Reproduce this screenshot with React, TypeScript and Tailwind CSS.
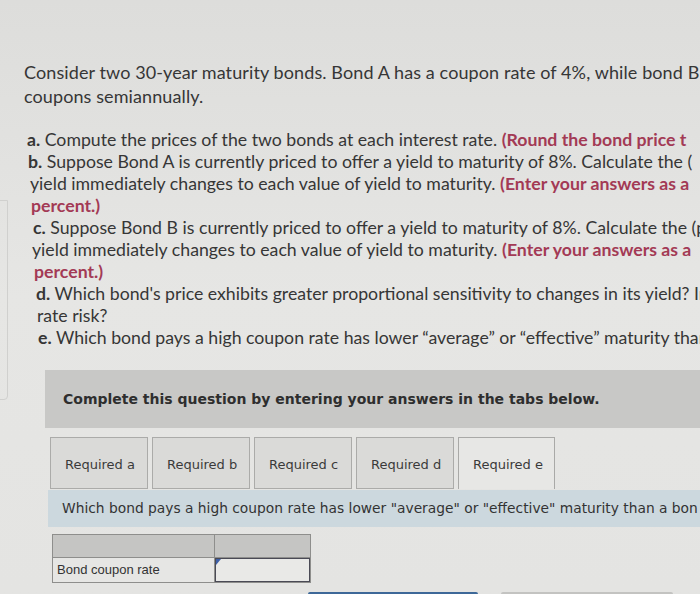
import React from "react";

const lato = { fontFamily: "Lato, 'Open Sans', sans-serif" };
const dv = { fontFamily: "'DejaVu Sans', Verdana, sans-serif" };
const arial = { fontFamily: "'Liberation Sans', Arial, sans-serif" };

function Line({ indent, children }: { indent: string; children: React.ReactNode }) {
  return <div className={`whitespace-nowrap h-[22px] leading-[22px] ${indent}`}>{children}</div>;
}

const Red = ({ children }: { children: React.ReactNode }) => (
  <span className="font-bold text-[#a33a55]">{children}</span>
);

const tabs = ["Required a", "Required b", "Required c", "Required d", "Required e"];

export default function App() {
  return (
    <div className="relative w-[700px] h-[594px] overflow-hidden bg-gradient-to-b from-[#dddddb] via-[#e6e6e4] to-[#e4e4e2] text-[#363636]">
      <div className="absolute left-[-12px] top-[200px] w-[20px] h-[200px] border border-[#d0d0ce] rounded-br-[4px]" />

      <div className="pt-[60px] pl-[24px] text-[18px] tracking-[0.1px]" style={lato}>
        <div className="whitespace-nowrap leading-[24px]">
          Consider two 30-year maturity bonds. Bond A has a coupon rate of 4%, while bond B
        </div>
        <div className="whitespace-nowrap leading-[24px]">coupons semiannually.</div>
      </div>

      <div className="mt-[21px] text-[17.7px]" style={lato}>
        <Line indent="pl-[27px]">
          <b>a.</b> Compute the prices of the two bonds at each interest rate. <Red>(Round the bond price t</Red>
        </Line>
        <Line indent="pl-[28px]">
          <b>b.</b> Suppose Bond A is currently priced to offer a yield to maturity of 8%. Calculate the (
        </Line>
        <Line indent="pl-[30px]">
          yield immediately changes to each value of yield to maturity. <Red>(Enter your answers as a</Red>
        </Line>
        <Line indent="pl-[31px]">
          <Red>percent.)</Red>
        </Line>
        <Line indent="pl-[33px]">
          <b>c.</b> Suppose Bond B is currently priced to offer a yield to maturity of 8%. Calculate the (p
        </Line>
        <Line indent="pl-[32px]">
          yield immediately changes to each value of yield to maturity. <Red>(Enter your answers as a</Red>
        </Line>
        <Line indent="pl-[34px]">
          <Red>percent.)</Red>
        </Line>
        <Line indent="pl-[36px]">
          <b>d.</b> Which bond's price exhibits greater proportional sensitivity to changes in its yield? In
        </Line>
        <Line indent="pl-[37px]">rate risk?</Line>
        <Line indent="pl-[38px]">
          <b>e.</b> Which bond pays a high coupon rate has lower “average” or “effective” maturity than
        </Line>
      </div>

      <div className="ml-[45px] mt-[21px] h-[58px] bg-[#c8c8c6] flex items-center pl-[18px]">
        <span className="whitespace-nowrap font-bold text-[14px] text-[#2e2e2e]" style={dv}>
          Complete this question by entering your answers in the tabs below.
        </span>
      </div>

      <div className="ml-[50px] mt-[9px] flex gap-[4px]" style={dv}>
        {tabs.map((t, i) => (
          <div
            key={t}
            className={
              i === 4
                ? "w-[97px] h-[52px] flex items-center pl-[14px] pt-[2px] text-[13px] text-[#3a3a3a] bg-[#e7e7e5] border border-b-0 border-[#a9a9a7]"
                : "w-[98px] h-[52px] flex items-center pl-[14px] pt-[3px] text-[13px] text-[#3a3a3a] bg-[#dadad8] border border-[#ababa9]"
            }
          >
            {t}
          </div>
        ))}
      </div>

      <div className="ml-[48px] mt-[1px] h-[37px] bg-[#ccd8de] flex items-center pl-[14px]">
        <span className="whitespace-nowrap text-[13.8px] text-[#333]" style={dv}>
          Which bond pays a high coupon rate has lower "average" or "effective" maturity than a bon
        </span>
      </div>

      <div className="ml-[52px] mt-[7px] w-[259px] border border-[#8e8e8c]" style={arial}>
        <div className="flex h-[23px] bg-[#c5c5c3] border-b border-[#8e8e8c]">
          <div className="w-[162px] border-r border-[#8e8e8c]" />
          <div className="flex-1" />
        </div>
        <div className="flex h-[24px]">
          <div className="w-[162px] border-r border-[#8e8e8c] flex items-center pl-[4px] text-[13px] text-[#333] bg-[#e6e6e4]">
            Bond coupon rate
          </div>
          <div className="relative flex-1 border-[1.5px] border-[#4a4a55] bg-[#e9e9e7]">
            <div className="absolute left-0 top-0 w-0 h-0 border-t-[6px] border-t-[#3d5fa8] border-r-[5px] border-r-transparent" />
          </div>
        </div>
      </div>

      <div className="flex mt-[9px]">
        <div className="ml-[308px] w-[170px] h-[30px] bg-[#3d6898] rounded-t-[2px]" />
        <div className="ml-[23px] w-[172px] h-[30px] bg-[#c3c3c1] rounded-t-[2px]" />
      </div>
    </div>
  );
}
